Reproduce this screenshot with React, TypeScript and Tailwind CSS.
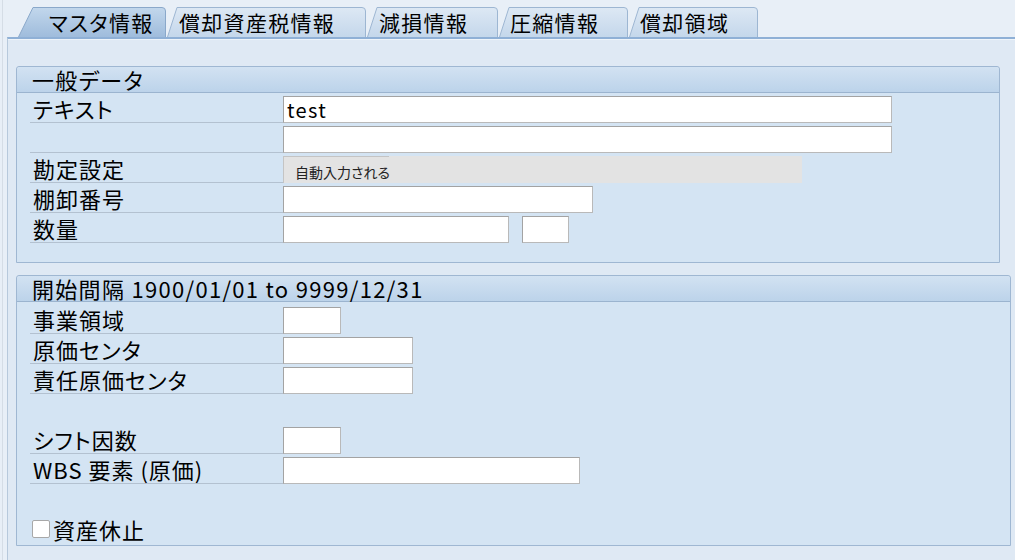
import React from "react";

const FONT = "font-['Noto_Sans_CJK_JP','Noto_Sans',sans-serif] [font-feature-settings:'palt']";

type TabDef = { label: string; w: number; s: number; pl: number; active?: boolean };

const tabs: TabDef[] = [
  { label: "マスタ情報", w: 148, s: 15, pl: 31, active: true },
  { label: "償却資産税情報", w: 199, s: 10, pl: 12 },
  { label: "減損情報", w: 131, s: 10, pl: 12 },
  { label: "圧縮情報", w: 129, s: 10, pl: 11 },
  { label: "償却領域", w: 129, s: 10, pl: 11 },
];

function Tab({ t, i }: { t: TabDef; i: number }) {
  const H = 30;
  const W = t.w;
  const id = `tg${i}`;
  return (
    <div className="relative h-[30px] shrink-0" style={{ width: W }}>
      <svg className="absolute inset-0" width={W} height={H} viewBox={`0 0 ${W} ${H}`}>
        <defs>
          <linearGradient id={id} x1="0" y1="0" x2="0" y2="1">
            {t.active ? (
              <>
                <stop offset="0" stopColor="#c2d7ec" />
                <stop offset="1" stopColor="#9fbcdc" />
              </>
            ) : (
              <>
                <stop offset="0" stopColor="#dde8f4" />
                <stop offset="1" stopColor="#c4d7eb" />
              </>
            )}
          </linearGradient>
        </defs>
        <path
          d={`M0.5 ${H} L${t.s} 0.5 L${W - 4} 0.5 Q${W - 0.5} 0.5 ${W - 0.5} 4 L${W - 0.5} ${H}`}
          fill={`url(#${id})`}
          stroke={t.active ? "#8aa8ca" : "#9db6d2"}
          strokeWidth="1"
        />
      </svg>
      <span
        className="relative block text-[21px] leading-[31px] tracking-[1.3px] text-black whitespace-nowrap"
        style={{ paddingLeft: t.pl }}
      >
        {t.label}
      </span>
    </div>
  );
}

function Input({ w, value }: { w: number; value?: string }) {
  return (
    <div
      className="h-[27px] bg-white border border-[#b9b9b9] border-t-[#a3a3a3] border-l-[#a3a3a3] shrink-0 pl-[3px] text-[20px] leading-[25px] tracking-[1.3px] text-black"
      style={{ width: w }}
    >
      {value}
    </div>
  );
}

function Row({ label, children }: { label: string; children?: React.ReactNode }) {
  return (
    <div className="flex items-end h-[30px]">
      <div className="w-[253px] ml-[13px] h-[30px] pl-[3px] pb-[1px] flex items-end border-b border-[#b3c1d0]">
        <span className="text-[22px] leading-[26px] tracking-[1px] text-black whitespace-nowrap">{label}</span>
      </div>
      <div className="flex items-end gap-[13px]">{children}</div>
    </div>
  );
}

function GroupHeader({ title }: { title: string }) {
  return (
    <div className="h-[26px] bg-gradient-to-b from-[#d2e2f2] to-[#bcd3ea] border-b border-[#9bb4cf] rounded-t-[3px] pl-[15px] text-[22px] leading-[25px] tracking-[1.3px] text-black whitespace-nowrap">
      {title}
    </div>
  );
}

export default function App() {
  return (
    <div className={`w-[1015px] h-[560px] overflow-hidden bg-[#e8eff7] ${FONT}`}>
      <div className="flex h-[37px]">
        <div className="w-[7px] shrink-0 relative">
          <div className="absolute left-[2px] top-0 bottom-0 w-px bg-[#d5dde6]" />
        </div>
        <div className="flex items-end gap-[1px] pl-[11px]">
          {tabs.map((t, i) => (
            <Tab key={i} t={t} i={i} />
          ))}
        </div>
      </div>
      <div className="flex h-[523px]">
        <div className="w-[7px] shrink-0 relative">
          <div className="absolute left-[2px] top-0 bottom-0 w-px bg-[#d5dde6]" />
        </div>
        <div className="flex-1 bg-[#dfe9f4] border-t-2 border-[#8fb0d6] border-l border-l-[#b7c9dc]">
          <div className="h-px bg-[#eef4fa]" />
          <div className="pt-[26px] pl-[8px]">
            {/* Group 1 */}
            <div className="w-[984px] h-[197px] border border-[#9fb7d2] rounded-t-[3px] bg-[#d4e4f3]">
              <GroupHeader title="一般データ" />
              <Row label="テキスト">
                <Input w={609} value="test" />
              </Row>
              <Row label="">
                <Input w={609} />
              </Row>
              <Row label="勘定設定">
                <div className="w-[519px] h-[27px] bg-[#e3e3e3] relative">
                  <div className="absolute left-0 top-0 w-[106px] h-px bg-[#c4c4c4]" />
                  <div className="absolute left-0 top-0 w-px h-full bg-[#c4c4c4]" />
                  <span className="absolute left-[12px] top-[6px] text-[14px] leading-[20px] text-[#222] whitespace-nowrap">
                    自動入力される
                  </span>
                </div>
              </Row>
              <Row label="棚卸番号">
                <Input w={310} />
              </Row>
              <Row label="数量">
                <Input w={226} />
                <Input w={47} />
              </Row>
            </div>
            {/* Group 2 */}
            <div className="mt-[12px] w-[995px] h-[271px] border border-[#9fb7d2] rounded-t-[3px] bg-[#d4e4f3]">
              <GroupHeader title="開始間隔 1900/01/01 to 9999/12/31" />
              <div className="h-[2px]" />
              <Row label="事業領域">
                <Input w={58} />
              </Row>
              <Row label="原価センタ">
                <Input w={130} />
              </Row>
              <Row label="責任原価センタ">
                <Input w={130} />
              </Row>
              <div className="h-[30px]" />
              <Row label="シフト因数">
                <Input w={58} />
              </Row>
              <Row label="WBS 要素 (原価)">
                <Input w={297} />
              </Row>
              <div className="h-[30px]" />
              <div className="flex items-center h-[30px] pl-[15px]">
                <div className="w-[18px] h-[18px] bg-white border border-[#a8a8a8] rounded-[2px] shrink-0" />
                <span className="ml-[3px] text-[22px] leading-[28px] tracking-[1px] text-black whitespace-nowrap">
                  資産休止
                </span>
              </div>
            </div>
          </div>
        </div>
      </div>
    </div>
  );
}
